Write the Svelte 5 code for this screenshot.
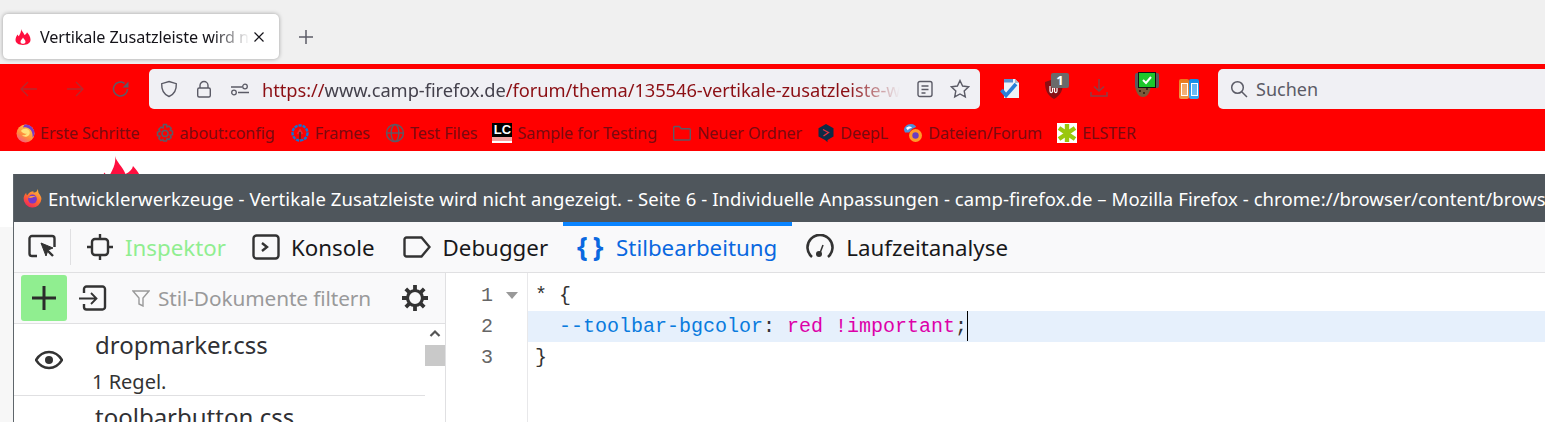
<script>
  const bookmarks = [
    { icon: 'fx', label: 'Erste Schritte' },
    { icon: 'gear', label: 'about:config' },
    { icon: 'frames', label: 'Frames' },
    { icon: 'globe', label: 'Test Files' },
    { icon: 'lc', label: 'Sample for Testing' },
    { icon: 'folder', label: 'Neuer Ordner' },
    { icon: 'deepl', label: 'DeepL' },
    { icon: 'files', label: 'Dateien/Forum' },
    { icon: 'elster', label: 'ELSTER' }
  ];
</script>

{#snippet fx(size)}
  <svg width={size} height={size} viewBox="0 0 20 20">
    <defs>
      <linearGradient id="fxg" x1="0.8" y1="0" x2="0.2" y2="1">
        <stop offset="0" stop-color="#ffbd3f" />
        <stop offset="0.5" stop-color="#ff6a2f" />
        <stop offset="1" stop-color="#f0205c" />
      </linearGradient>
    </defs>
    <path d="M15 1c.6 2 .4 3 1 4 1.500 2 2.500 3.500 2.500 5.500A8.500 8.500 0 1 1 1.500 9.500C2 7 3 5.500 4 4.500c0 1.200.3 2 1 2.500C6 4.500 9 3 11 3c-.4.700-.3 1 .2 1.300C13 4.500 14.500 3.500 15 1z" fill="url(#fxg)" />
    <circle cx="10" cy="10.500" r="4.200" fill="#7539c9" />
    <path d="M6 9c2-1.800 6-1.800 7.500 0-1-.5-2.500-.5-3.500 0-1 .6-3 .6-4 0z" fill="#ff9a3c" />
  </svg>
{/snippet}

{#snippet flame(size)}
  <svg width={size} height={size} viewBox="0 0 16 16">
    <path d="M6 0c.5 2 2.500 3.500 3.500 6C10.800 5.400 11.800 4.400 12 3.300c2 2.200 3.500 4.700 3.500 7.500C15.500 14 12.500 16 8 16S.5 14 .5 10.800c0-2 1-3.500 2-5.300.5.700.7 1.300 1.300 1.700C5 5 6.500 2.500 6 0zM8 8.500c-.4 1.500-2.500 2.300-2.500 4.200 0 1.300 1.100 2.100 2.500 2.100s2.500-.8 2.500-2.100C10.500 11 8.500 10 8 8.500z" fill="#ff0f3f" fill-rule="evenodd" />
  </svg>
{/snippet}

{#snippet bmIcon(kind)}
  {#if kind === 'fx'}
    <svg width="19" height="20" viewBox="0 0 19 20">
      <defs>
        <linearGradient id="fxb" x1="0.7" y1="0.2" x2="0.2" y2="1">
          <stop offset="0" stop-color="#ffc14a" />
          <stop offset="0.55" stop-color="#ff8a3c" />
          <stop offset="1" stop-color="#f2558c" />
        </linearGradient>
      </defs>
      <circle cx="9.500" cy="10.500" r="9" fill="url(#fxb)" />
      <path d="M9 1.500a9 9 0 0 1 9.500 8.500c0 2-1 3.500-2 4.500 .5-4-1-8-4.500-9.500C10.500 4.200 9 4 7 4.500 7.500 3 8 2 9 1.500z" fill="#7b3bc8" />
      <path d="M5 8c1.500-2.500 6-3 8-.5 1.500 2 .7 5-2 6-2 .7-4-.2-5-1.500 1.500.5 4 .3 5-1.500-1.500.5-4 .2-6-2.500z" fill="#ffe27a" />
    </svg>
  {:else if kind === 'gear'}
    <svg width="20" height="20" viewBox="0 0 20 20" fill="none" stroke="#5b5b66" stroke-width="1.500">
      <path d="M8.500 1.500h3l.5 2.500 2-.9 2.200 2.200-1.100 2 2.400.9v3.400l-2.400.7 1.100 2.100-2.200 2.200-2-1-.5 2.400h-3L8 16.600l-2 1-2.200-2.200 1.100-2.100-2.400-.7V9.200l2.400-.9-1.100-2 2.200-2.200 2 .9z" />
      <circle cx="10" cy="10.400" r="3" />
    </svg>
  {:else if kind === 'frames'}
    <svg width="20" height="20" viewBox="0 0 20 20" fill="none">
      <circle cx="10" cy="10" r="7.500" stroke="#0f74d6" stroke-width="2.400" stroke-dasharray="3.200 1" />
      <path d="M7.500 11l2.500-4 2.500 4" stroke="#d9333f" stroke-width="1.500" />
      <path d="M10 9v7" stroke="#333" stroke-width="1.500" />
    </svg>
  {:else if kind === 'globe'}
    <svg width="20" height="20" viewBox="0 0 20 20" fill="none" stroke="#5b5b66" stroke-width="1.400">
      <circle cx="10" cy="10" r="8.500" />
      <ellipse cx="10" cy="10" rx="3.800" ry="8.500" />
      <path d="M1.500 10h17" />
    </svg>
  {:else if kind === 'lc'}
    <span class="lc"><b>LC</b></span>
  {:else if kind === 'folder'}
    <svg width="20" height="20" viewBox="0 0 20 20" fill="none" stroke="#5b5b66" stroke-width="1.400">
      <path d="M1.700 16V4.500a1 1 0 0 1 1-1h4.600l2 2.300h8a1 1 0 0 1 1 1V16a1 1 0 0 1-1 1H2.700a1 1 0 0 1-1-1z" />
    </svg>
  {:else if kind === 'deepl'}
    <svg width="18" height="20" viewBox="0 0 18 20">
      <path d="M9 1l7.500 4.200v8.300L10.500 17v2.200L8 17 1.500 13.500V5.200z" fill="#0f2b46" />
      <path d="M6 6.500l5.500 3L6.500 13" fill="none" stroke="#e5333f" stroke-width="1.300" />
    </svg>
  {:else if kind === 'files'}
    <svg width="20" height="20" viewBox="0 0 20 20">
      <path d="M1 7c0-3 3-6 7-6 3 0 5 2 5 3L9 6 6 9.500 2 9.500z" fill="#4d8fd8" />
      <path d="M3 5c2-2 5-2 6 0-2 0-4 1-4 2.500z" fill="#fff" />
      <circle cx="12.500" cy="12.500" r="6.500" fill="#ff9a28" />
      <circle cx="12.500" cy="12.500" r="3.200" fill="#6b3ec0" />
    </svg>
  {:else if kind === 'elster'}
    <svg class="elster" width="20" height="20" viewBox="0 0 20 20">
      <rect width="20" height="20" fill="#fff" />
      <path d="M10 1v18M2 5l16 11M18 5L2 16" stroke="#9ac70d" stroke-width="4.400" />
    </svg>
  {/if}
{/snippet}

<div class="page">
  <div class="tabstrip">
    <div class="tab">
      <span class="tab-icon">{@render flame(16)}</span>
      <span class="tab-title">Vertikale Zusatzleiste wird nicht angezeigt</span>
      <svg class="tab-close" width="12" height="12" viewBox="0 0 12 12" stroke="#15141a" stroke-width="1.200">
        <path d="M1.500 1.500l9 9M10.500 1.500l-9 9" />
      </svg>
    </div>
    <svg class="newtab" width="16" height="16" viewBox="0 0 16 16" stroke="#5b5b66" stroke-width="1.500">
      <path d="M8 1v14M1 8h14" />
    </svg>
  </div>

  <div class="navbar">
    <div class="navrow">
      <div class="navbuttons">
        <svg width="18" height="18" viewBox="0 0 18 18" fill="none" stroke="#5b5b66" stroke-width="1.300" opacity="0.45"><path d="M17 9H1M8 2L1 9l7 7" /></svg>
        <svg width="18" height="18" viewBox="0 0 18 18" fill="none" stroke="#5b5b66" stroke-width="1.300" opacity="0.45"><path d="M1 9h16M10 2l7 7-7 7" /></svg>
        <svg width="18" height="18" viewBox="0 0 18 18" fill="none" stroke="#5b5b66" stroke-width="1.500"><path d="M15.500 9a7 7 0 1 1-3-5.700" /><path d="M16.500 1.500v6h-6z" fill="#5b5b66" stroke="none" /></svg>
      </div>
      <div class="urlbar">
        <svg class="ic" width="18" height="18" viewBox="0 0 18 18" fill="none" stroke="#5b5b66" stroke-width="1.400"><path d="M9 1.500l7.300 2.200c.3 6.500-1.700 10.500-7.300 12.800C3.400 14.200 1.400 10.200 1.700 3.700z" /></svg>
        <svg class="ic" width="18" height="18" viewBox="0 0 18 18" fill="none" stroke="#5b5b66" stroke-width="1.400"><path d="M5 8V5.500a4 4 0 0 1 8 0V8" /><rect x="2.700" y="8" width="12.600" height="9" rx="1.500" /></svg>
        <svg class="ic" width="20" height="18" viewBox="0 0 20 18" fill="none" stroke="#5b5b66" stroke-width="1.300"><path d="M1 7h11M8 12.500h11" /><circle cx="15" cy="6.500" r="2.300" /><circle cx="4" cy="12.500" r="2.300" /></svg>
        <div class="url"><span class="proto">https://</span><span class="host">www.camp-firefox.de</span>/forum/thema/135546-vertikale-zusatzleiste-wird-nicht-angezeigt</div>
        <svg class="ic" width="16" height="18" viewBox="0 0 16 18" fill="none" stroke="#5b5b66" stroke-width="1.400"><rect x="1" y="1.500" width="14" height="15" rx="2" /><path d="M4.500 6h7M4.500 9.500h7M4.500 13h4" /></svg>
        <svg class="ic" width="20" height="20" viewBox="0 0 20 20" fill="none" stroke="#5b5b66" stroke-width="1.400"><path d="M10 1.500l2.600 5.500 6 .8-4.400 4.100 1.100 6L10 15l-5.300 2.900 1.100-6L1.400 7.800l6-.8z" /></svg>
      </div>
      <div class="ext">
        <svg class="e1" width="20" height="20" viewBox="0 0 20 20">
          <path d="M4 0h11l4 4v15H4z" fill="#eef2f8" />
          <path d="M15 0l4 4h-4z" fill="#aab8c8" />
          <path d="M4 0h9v3.500H4z" fill="#5a8fd0" />
          <path d="M1.500 11l4.500 5.500L16 5" fill="none" stroke="#2a7fd8" stroke-width="3.600" />
        </svg>
        <span class="e2">
          <svg width="18" height="20" viewBox="0 0 18 20"><path d="M0 3l9-3 9 3c0 8-2 13-9 17C2 16 0 11 0 3z" fill="#8a0f14" /><path d="M5 7v5c0 2 2 2 2.500.5V9h2v3.500c.5 1.500 2.500 1.500 2.500-.5V7" fill="none" stroke="#fff" stroke-width="1.200" /></svg>
          <span class="badge">1</span>
        </span>
        <svg class="e3" width="18" height="18" viewBox="0 0 18 18" fill="none" stroke="#5b5b66" stroke-width="1.500" opacity="0.7"><path d="M9 0v12M4 7.500L9 12l5-4.500M1 13v4h16v-4" /></svg>
        <span class="e4">
          <svg width="16" height="14" viewBox="0 0 16 14"><path d="M0 0h16c0 8-3 14-8 14S0 8 0 0z" fill="#7a5a3a" /><circle cx="5" cy="8" r="1" fill="#2a1a0e" /><circle cx="9" cy="10" r="1" fill="#2a1a0e" /><circle cx="12" cy="6" r="1" fill="#2a1a0e" /></svg>
          <span class="check">
            <svg width="14" height="12" viewBox="0 0 14 12" fill="none" stroke="#fff" stroke-width="2"><path d="M3 6l3 3 5-6" /></svg>
          </span>
        </span>
        <span class="e5">
          <span class="bat orange"><i></i></span>
          <span class="bat blue"><i></i></span>
        </span>
      </div>
      <div class="search">
        <svg width="18" height="18" viewBox="0 0 18 18" fill="none" stroke="#5b5b66" stroke-width="1.500"><circle cx="7.500" cy="7.500" r="5.800" /><path d="M11.700 11.700L17 17" /></svg>
        <span>Suchen</span>
      </div>
    </div>
    <div class="bookmarks">
      {#each bookmarks as b}
        <div class="bm">
          <span class="bm-icon">{@render bmIcon(b.icon)}</span>
          <span>{b.label}</span>
        </div>
      {/each}
    </div>
  </div>

  <div class="content">
    <div class="bigflame">{@render flame(48)}</div>
    <div class="below"></div>

    <div class="win">
      <div class="titlebar">
        <span class="tb-icon">{@render fx(21)}</span>
        <span class="tb-text">Entwicklerwerkzeuge - Vertikale Zusatzleiste wird nicht angezeigt. - Seite 6 - Individuelle Anpassungen - camp-firefox.de – Mozilla Firefox - chrome://browser/content/browser.xhtml</span>
      </div>
      <div class="dt-tabs">
        <div class="picker">
          <svg width="28" height="26" viewBox="0 0 28 26" fill="none" stroke="#333" stroke-width="2.400">
            <path d="M9 22H4a2.500 2.500 0 0 1-2.500-2.500v-15A2.500 2.500 0 0 1 4 2h20a2.500 2.500 0 0 1 2.500 2.500V13" />
            <path d="M13 9l12 5-5 2-2 6z" fill="#333" stroke-width="1" />
            <path d="M19 16l6 6" stroke-width="2.400" />
          </svg>
        </div>
        <div class="dt-tab inspector">
          <svg width="28" height="28" viewBox="0 0 28 28" fill="none" stroke="#333" stroke-width="2.400"><rect x="6" y="6" width="16" height="16" rx="3" /><path d="M14 1v5M14 22v5M1 14h5M22 14h5" /></svg>
          <span>Inspektor</span>
        </div>
        <div class="dt-tab konsole">
          <svg width="28" height="26" viewBox="0 0 28 26" fill="none" stroke="#333" stroke-width="2.400"><rect x="1.500" y="1.500" width="25" height="23" rx="3" /><path d="M10 9l5 4-5 4" /></svg>
          <span>Konsole</span>
        </div>
        <div class="dt-tab debugger">
          <svg width="28" height="22" viewBox="0 0 28 22" fill="none" stroke="#333" stroke-width="2.400"><path d="M3.500 1.500h15l8 9.500-8 9.500h-15a2 2 0 0 1-2-2v-15a2 2 0 0 1 2-2z" /></svg>
          <span>Debugger</span>
        </div>
        <div class="dt-tab active">
          <span class="braces">{'{ }'}</span>
          <span>Stilbearbeitung</span>
        </div>
        <div class="dt-tab">
          <svg width="28" height="26" viewBox="0 0 28 26" fill="none" stroke="#333" stroke-width="2.600"><path d="M6 23A12.500 12.500 0 1 1 22 23" /><circle cx="13" cy="20" r="3" fill="#333" stroke="none" /><path d="M14 19l3-8" stroke-width="1.600" /></svg>
          <span>Laufzeitanalyse</span>
        </div>
      </div>
      <div class="editor-wrap">
        <div class="side">
          <div class="side-bar">
            <div class="add">
              <svg width="24" height="24" viewBox="0 0 24 24" stroke="#2b2b2b" stroke-width="3"><path d="M12 0v24M0 12h24" /></svg>
            </div>
            <svg class="imp" width="28" height="26" viewBox="0 0 28 26" fill="none" stroke="#333" stroke-width="2.400"><path d="M5 8V4a2.500 2.500 0 0 1 2.500-2.500h16A2.500 2.500 0 0 1 26 4v18a2.500 2.500 0 0 1-2.500 2.500h-16A2.500 2.500 0 0 1 5 22v-3" /><path d="M0 13.500h17M12 8l5.500 5.500L12 19" stroke-width="1.800" /></svg>
            <div class="filter">
              <svg width="18" height="18" viewBox="0 0 18 18" fill="none" stroke="#9a9a9a" stroke-width="1.400"><path d="M1 2h16l-6 7v8l-4-2V9z" /></svg>
              <span>Stil-Dokumente filtern</span>
            </div>
            <svg class="cog" width="28" height="28" viewBox="0 0 28 28" fill="none" stroke="#333"><circle cx="14" cy="14" r="7.500" stroke-width="3.200" /><path d="M14 1v5M14 22v5M1 14h5M22 14h5M4.800 4.800l3.500 3.500M19.700 19.700l3.500 3.500M23.200 4.800l-3.500 3.500M8.300 19.700l-3.500 3.500" stroke-width="3.800" /></svg>
          </div>
          <div class="list">
            <div class="sheets">
              <div class="sheet">
                <svg class="eye" width="28" height="20" viewBox="0 0 28 20"><path d="M14 2C8 2 3.500 6 1 10c2.500 4 7 8 13 8s10.500-4 13-8c-2.500-4-7-8-13-8z" fill="none" stroke="#333" stroke-width="2.400" /><circle cx="14" cy="10" r="4" fill="#333" /></svg>
                <div class="sheet-name">dropmarker.css</div>
                <div class="sheet-rule">1 Regel.</div>
              </div>
              <div class="sheet">
                <div class="sheet-name">toolbarbutton.css</div>
              </div>
            </div>
            <div class="scroll">
              <svg width="12" height="9" viewBox="0 0 12 9" fill="none" stroke="#555" stroke-width="2.200"><path d="M1.500 7L6 2.500 10.500 7" /></svg>
              <div class="thumb"></div>
            </div>
          </div>
        </div>
        <div class="code">
          <div class="gutter">
            <div class="ln">1<span class="fold"></span></div>
            <div class="ln">2</div>
            <div class="ln">3</div>
          </div>
          <div class="lines">
            <div class="line">* &#123;</div>
            <div class="line current"><span class="prop">--toolbar-bgcolor</span>: <span class="val">red !important</span>;<span class="caret"></span></div>
            <div class="line">&#125;</div>
          </div>
        </div>
      </div>
    </div>
  </div>
</div>

<style>
  :global(body) { margin: 0; background: #fff; overflow: hidden; }
  .page { width: 1545px; height: 422px; overflow: hidden; font-family: "Noto Sans", "Open Sans", sans-serif; display: flex; flex-direction: column; }
  svg { flex: none; display: block; }

  .tabstrip { height: 64px; background: #f0f0f0; display: flex; align-items: center; padding: 14px 0 5px 3px; box-sizing: border-box; }
  .tab { width: 276px; height: 45px; background: #fff; border-radius: 5px; box-shadow: 0 0 4px rgba(0,0,0,.35); display: flex; align-items: center; padding: 0 14px 0 12px; box-sizing: border-box; }
  .tab-icon { margin-right: 9px; }
  .tab-title { flex: 1; overflow: hidden; white-space: nowrap; font-size: 16.200px; color: #15141a; -webkit-mask-image: linear-gradient(to right, #000 82%, transparent 100%); mask-image: linear-gradient(to right, #000 82%, transparent 100%); letter-spacing: -0.1px; }
  .tab-close { margin-left: 3px; }
  .newtab { margin-left: 19px; }

  .navbar { height: 87px; background: #f00; display: flex; flex-direction: column; }
  .navrow { height: 50px; display: flex; padding-top: 5px; box-sizing: border-box; }
  .navbuttons { width: 149px; display: flex; align-items: center; gap: 28px; padding: 0 0 0 20px; box-sizing: border-box; height: 40px; }
  .urlbar { width: 831px; height: 40px; background: #f0f0f4; border-radius: 5px; display: flex; align-items: center; padding: 0 10px 0 11px; box-sizing: border-box; gap: 17px; }
  .url { flex: 1; overflow: hidden; white-space: nowrap; font-size: 18.300px; color: #8c0f14; margin-left: -5px; letter-spacing: -0.05px; -webkit-mask-image: linear-gradient(to right, #000 92%, transparent 100%); mask-image: linear-gradient(to right, #000 92%, transparent 100%); }
  .host { color: #44414c; }
  .proto { color: #8c0f14; }

  .ext { width: 238px; height: 40px; position: relative; display: flex; align-items: center; }
  .e1 { margin-left: 20px; }
  .e2 { position: relative; margin-left: 25px; width: 18px; height: 20px; }
  .badge { position: absolute; left: 6px; top: -6px; width: 18px; height: 15px; background: #6a6a6a; color: #fff; border-radius: 2px; font-size: 13px; font-weight: 700; line-height: 15px; text-align: center; }
  .e3 { margin-left: 27px; margin-top: -2px; }
  .e4 { position: relative; width: 24px; height: 24px; margin-left: 27px; display: block; margin-top: -8px; }
  .e4 > svg { position: absolute; left: 0; top: 10px; }
  .check { position: absolute; left: 0; top: 0; width: 24px; height: 15px; background: #5b5b5f; border-radius: 2px; }
  .check::before { content: ""; position: absolute; left: 4px; top: 0; width: 16px; height: 14px; background: #1cc72b; outline: 1px solid #111; }
  .check svg { position: absolute; left: 5px; top: 1px; }
  .e5 { display: flex; margin-left: 20px; }
  .bat { width: 10px; height: 20px; display: flex; align-items: center; justify-content: center; border-radius: 2px; }
  .bat i { display: block; width: 5px; height: 11px; border: 1px solid #fff; background: rgba(255,255,255,.3); }
  .orange { background: linear-gradient(#e8781a, #f09a4a); }
  .blue { background: linear-gradient(#0f8ae8, #3aa8f5); }

  .search { flex: 1; height: 40px; background: #f0f0f4; border-radius: 5px 0 0 5px; display: flex; align-items: center; gap: 8px; padding-left: 12px; font-size: 18px; color: #5b5b66; }

  .bookmarks { display: flex; align-items: center; padding-left: 16px; height: 37px; font-size: 16.200px; color: #7a0a10; letter-spacing: -0.1px; }
  .bm { display: flex; align-items: center; gap: 5px; margin-right: 15px; white-space: nowrap; }
  .bm-icon { display: flex; }
  .lc { display: block; width: 20px; height: 20px; background: linear-gradient(#000 0 14px, #f3a3a3 14px 18px, #fff 18px); color: #fff; font-size: 13px; line-height: 14px; text-align: center; font-family: "Liberation Sans", sans-serif; }

  .content { flex: 1; position: relative; background: #fff; }
  .bigflame { position: absolute; left: 97px; top: 5px; }
  .below { position: absolute; left: 0; right: 0; top: 76px; bottom: 0; background: #f7f7f7; }

  .win { position: absolute; left: 13px; top: 23px; right: 0; bottom: 0; border-left: 1px solid #5f666b; background: #fff; display: flex; flex-direction: column; }
  .titlebar { height: 48px; background: #4f565c; color: #fff; display: flex; align-items: center; padding-left: 8px; gap: 5px; flex: none; font-size: 18.500px; white-space: nowrap; overflow: hidden; }
  .tb-text { letter-spacing: 0.08px; }

  .dt-tabs { height: 51px; background: #f9f9fa; border-bottom: 1px solid #e0e0e2; box-sizing: border-box; display: flex; align-items: center; flex: none; font-size: 22.300px; color: #18181a; }
  .picker { width: 57px; height: 36px; display: flex; align-items: center; padding-left: 14px; box-sizing: border-box; border-right: 1px solid #e0e0e2; }
  .dt-tab { height: 100%; display: flex; align-items: center; gap: 12px; padding: 0 14px; position: relative; white-space: nowrap; }
  .inspector { color: #90ee90; padding: 0 12px 0 15px; gap: 11px; }
  .konsole { gap: 11px; }
  .debugger { padding-right: 15px; }
  .active { color: #0a68e0; padding-right: 15px; }
  .active::before { content: ""; position: absolute; left: 0; right: 0; top: 0; height: 4px; background: #0a84ff; }
  .braces { width: 27px; font-size: 27px; font-weight: 700; letter-spacing: -1px; line-height: 1; margin-top: -4px; white-space: nowrap; }

  .editor-wrap { flex: 1; display: flex; min-height: 0; }
  .side { width: 432px; flex: none; background: #fff; border-right: 1px solid #e0e0e2; box-sizing: border-box; display: flex; flex-direction: column; }
  .side-bar { height: 51px; background: #f9f9fa; border-bottom: 1px solid #e0e0e2; box-sizing: border-box; display: flex; align-items: center; flex: none; padding-left: 7px; }
  .add { width: 46px; height: 46px; background: #90ee90; border-radius: 3px; display: flex; align-items: center; justify-content: center; }
  .imp { margin-left: 12px; }
  .filter { display: flex; align-items: center; gap: 8px; margin-left: 25px; font-size: 20.800px; color: #9a9a9a; width: 269px; letter-spacing: -0.1px; white-space: nowrap; }

  .list { flex: 1; display: flex; min-height: 0; overflow: hidden; }
  .sheets { width: 411px; flex: none; }
  .sheet { position: relative; height: 72px; border-bottom: 1px solid #e0e0e2; padding-left: 81px; box-sizing: border-box; color: #333; }
  .eye { position: absolute; left: 21px; top: 26px; }
  .sheet-name { font-size: 24px; line-height: 28px; padding-top: 7px; color: #303034; white-space: nowrap; }
  .sheet-rule { font-size: 20px; line-height: 24px; margin-left: -3px; margin-top: 11px; color: #333; }
  .scroll { flex: 1; background: #fff; display: flex; flex-direction: column; align-items: center; padding-top: 5px; }
  .thumb { width: 100%; height: 21px; background: #c9c9c9; margin-top: 7px; }

  .code { flex: 1; display: flex; background: #fff; font-family: "Liberation Mono", "DejaVu Sans Mono", monospace; font-size: 20px; }
  .gutter { width: 82px; flex: none; border-right: 1px solid #e8e8ea; box-sizing: border-box; padding-top: 7px; }
  .ln { height: 31px; line-height: 31px; padding-left: 35px; color: #666; position: relative; }
  .fold { position: absolute; left: 60px; top: 12px; border: 6px solid transparent; border-top: 7px solid #999; border-bottom: 0; }
  .lines { flex: 1; padding-top: 7px; color: #333; }
  .line { height: 31px; line-height: 31px; padding-left: 7px; position: relative; white-space: pre; }
  .current { background: #e6f0fc; padding-left: 31px; }
  .prop { color: #0a7bde; }
  .val { color: #dd00a9; }
  .caret { display: inline-block; width: 1px; height: 30px; background: #000; vertical-align: middle; margin-top: -2px; }
</style>
